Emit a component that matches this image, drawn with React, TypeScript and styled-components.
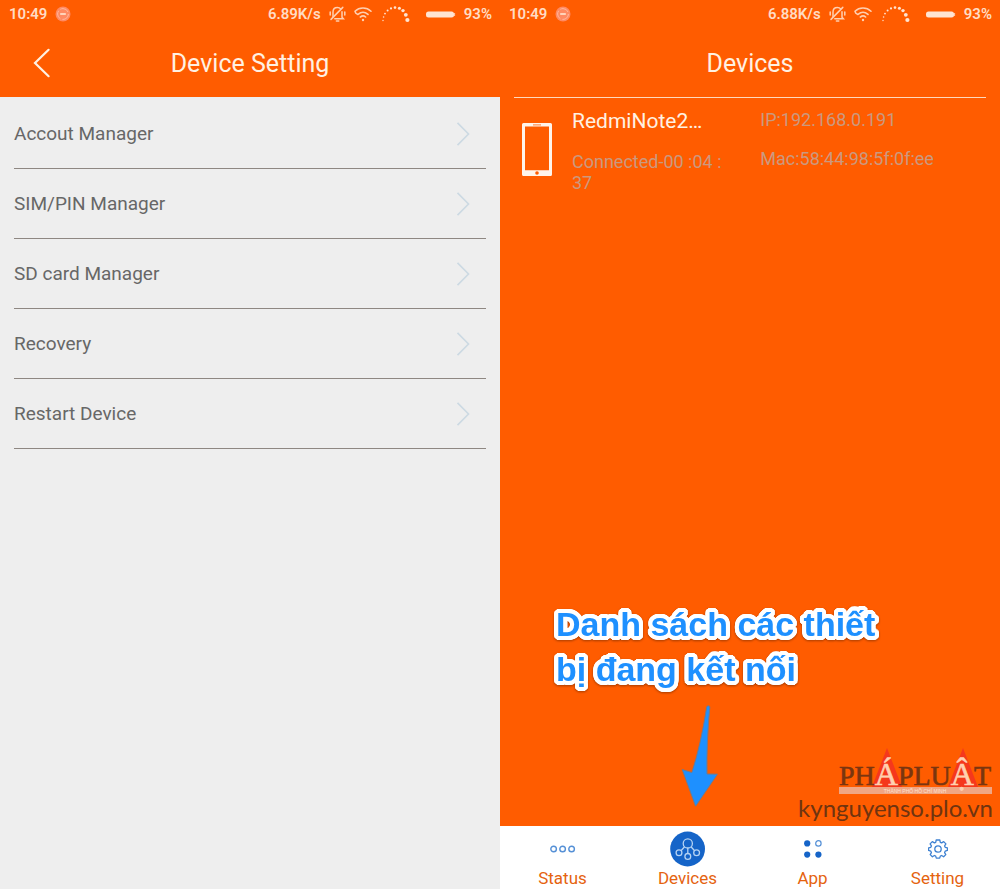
import React from "react";
import styled, { createGlobalStyle } from "styled-components";

const GlobalStyle = createGlobalStyle`
  *, *::before, *::after { box-sizing: border-box; }
  body {
    margin: 0;
    font-family: Roboto, "Noto Sans", sans-serif;
    background: #eeeeee;
  }
  button { font: inherit; border: 0; background: none; padding: 0; cursor: pointer; }
  ul { list-style: none; margin: 0; padding: 0; }
  h1, h2, p { margin: 0; font-weight: 400; }
`;

const orange = "#ff5c00";

const Screens = styled.main`
  display: flex;
  min-height: 100vh;
`;

const Screen = styled.section<{ $tone: string }>`
  flex: 1 1 0;
  min-width: 0;
  display: flex;
  flex-direction: column;
  background: ${(p) => p.$tone};
`;

const Header = styled.header`
  background: ${orange};
  color: #fff1e2;
`;

const StatusBar = styled.div`
  display: flex;
  align-items: center;
  height: 28px;
  padding: 0 8px 0 9px;
  color: #ffdcc4;
  font-size: 15px;
  font-weight: 600;
  line-height: 28px;
`;

const StatusGroup = styled.div`
  display: flex;
  align-items: center;
  gap: 8px;

  &:last-child { margin-left: auto; }
  svg { display: block; }
`;

const SignalSlot = styled.span`
  padding: 0 8px 0 2px;
`;

const TitleBar = styled.div`
  display: grid;
  grid-template-columns: 84px 1fr 84px;
  align-items: center;
  height: 69px;
`;

const Title = styled.h1`
  grid-column: 2;
  padding-top: 2px;
  font-size: 25px;
  line-height: 32px;
  text-align: center;
`;

const BackButton = styled.button`
  grid-column: 1;
  grid-row: 1;
  display: flex;
  justify-content: center;
  align-items: center;
  height: 48px;
  color: #fff1e2;
`;

const SettingsList = styled.ul`
  padding: 2px 14px 0;
`;

const SettingRow = styled.button`
  display: flex;
  align-items: center;
  justify-content: space-between;
  width: 100%;
  height: 70px;
  padding-right: 16px;
  border-bottom: 1px solid #8e8782;
  color: #676767;
  font-size: 19px;
  line-height: 24px;
  text-align: left;
`;

const DevicesBody = styled.div`
  position: relative;
  flex: 1;
`;

const DeviceList = styled.ul`
  margin: 0 14px;
  border-top: 1px solid #ffd9bd;
`;

const DeviceRow = styled.li`
  display: grid;
  grid-template-columns: 30px 7fr 10fr;
  column-gap: 20px;
  padding: 11px 0 0 8px;

  > svg { margin-top: 14px; }
`;

const DeviceInfo = styled.div<{ $indent?: number }>`
  display: flex;
  flex-direction: column;
  gap: 18px;
  padding-left: ${(p) => p.$indent ?? 0}px;
`;

const DeviceName = styled.h2`
  color: #fff1e2;
  font-size: 21px;
  line-height: 24px;
`;

const DeviceDetail = styled.p`
  color: #cb997f;
  font-size: 18px;
  line-height: 21px;
`;

const outline = (radius: number, color: string) =>
  Array.from({ length: 32 }, (_, i) => {
    const angle = (i / 32) * Math.PI * 2;
    return `${(Math.cos(angle) * radius).toFixed(2)}px ${(Math.sin(angle) * radius).toFixed(2)}px 0 ${color}`;
  }).join(", ");

const Callout = styled.p`
  position: absolute;
  left: 56px;
  bottom: 134px;
  width: 350px;
  color: #1e90ff;
  font: 700 34px/45px "Liberation Sans", Arial, sans-serif;
  text-shadow: ${outline(2, "#ffffff")}, ${outline(4, "#ffffff")};
  filter: drop-shadow(0 1px 1px rgba(80, 30, 0, 0.5));
`;

const CalloutArrow = styled.svg`
  position: absolute;
  left: 180px;
  bottom: 18px;
`;

const Watermark = styled.div`
  position: absolute;
  right: 7px;
  bottom: 4px;
  text-align: right;
  color: #6f3410;

  svg { display: block; margin-left: auto; }
`;

const WatermarkSite = styled.p`
  font-family: Lato, sans-serif;
  font-size: 24px;
  line-height: 28px;
`;

const TabBar = styled.nav`
  display: flex;
  height: 63px;
  background: #ffffff;
`;

const Tab = styled.button`
  flex: 1;
  display: flex;
  flex-direction: column;
  align-items: center;
  padding-top: 4px;
  color: #e5630f;
  font-size: 17px;
  line-height: 20px;
  gap: 1px;

  svg { display: block; }
`;

const TabIcon = styled.span`
  display: flex;
  align-items: center;
  justify-content: center;
  height: 37px;
`;

const SyncBadge = () => (
  <svg width="16" height="16" viewBox="0 0 16 16" aria-hidden="true">
    <circle cx="8" cy="8" r="7.5" fill="#ff8a62" />
    <circle cx="8" cy="8" r="5.4" fill="none" stroke="#ffb79c" strokeWidth="1" strokeDasharray="9 2" />
    <path d="M5.2 8h5.6" stroke="#ffdcc4" strokeWidth="1.8" />
  </svg>
);

const MutedBell = () => (
  <svg width="17" height="16" viewBox="0 0 17 16" fill="none" stroke="#ffcfb0" strokeWidth="1.5" strokeLinecap="round" aria-hidden="true">
    <path d="M4 10.6V6.2C4 3.4 5.9 1.6 8.4 1.6c1.4 0 2.6.5 3.4 1.4M13 5.8v5.4l1.4 1.6H5.8" />
    <path d="M2 13.4 13.8 1.4M7.4 15h2.4M1.2 6v3M15.8 6v3" />
  </svg>
);

const Wifi = () => (
  <svg width="18" height="16" viewBox="0 0 18 16" fill="none" stroke="#ffcfb0" strokeWidth="1.6" strokeLinecap="round" aria-hidden="true">
    <path d="M1 5.2C5.4.9 12.6.9 17 5.2M3.6 8.4C1 6.8 1 6.4 1.2 5.4M4 8.4c3.2-2.8 6.8-2.8 10 0M6.4 11c1.8-1.4 3.6-1.4 5.2 0" />
    <circle cx="9" cy="14" r="1.2" fill="#ffcfb0" stroke="none" />
  </svg>
);

const signalDots: [number, number, number][] = [
  [1, 14.5, 0.7],
  [1.6, 11, 0.8],
  [3, 7.6, 0.9],
  [5.6, 4.6, 1],
  [9, 2.4, 1.1],
  [13, 1.6, 1.3],
  [17.4, 2.2, 1.5],
  [21, 4.6, 1.7],
  [23.8, 8.8, 1.9],
  [25.4, 14, 2.1],
];

const SignalArc = () => (
  <svg width="28" height="17" viewBox="0 0 28 17" fill="#ffe4d2" aria-hidden="true">
    {signalDots.map(([x, y, r]) => (
      <circle key={x} cx={x} cy={y} r={r} />
    ))}
  </svg>
);

const Battery = () => (
  <svg width="30" height="7" viewBox="0 0 30 7" aria-hidden="true">
    <rect width="28" height="6" y="0.5" rx="2.5" fill="#ffe4d2" />
    <path d="M28.6 2v3" stroke="#ffcfb0" strokeWidth="1" />
  </svg>
);

const Phone = () => (
  <svg width="30" height="54" viewBox="0 0 30 54" aria-hidden="true">
    <path
      fillRule="evenodd"
      fill="#fff4ea"
      d="M1.5 0h27a1.5 1.5 0 0 1 1.5 1.5v50a1.5 1.5 0 0 1-1.5 1.5h-27a1.5 1.5 0 0 1-1.5-1.5v-50a1.5 1.5 0 0 1 1.5-1.5ZM3 3.6v43.6h24V3.6Z"
    />
    <path d="M11 1.9h8" stroke={orange} strokeWidth="0.8" />
    <circle cx="15" cy="50" r="1.8" fill={orange} />
  </svg>
);

const Chevron = () => (
  <svg width="14" height="24" viewBox="0 0 14 24" fill="none" stroke="#cddae3" strokeWidth="1.7" aria-hidden="true">
    <path d="M1.5 .8 12.5 12 1.5 23.2" />
  </svg>
);

const BackArrow = () => (
  <svg width="18" height="30" viewBox="0 0 18 30" fill="none" stroke="currentColor" strokeWidth="2.2" strokeLinecap="round" aria-hidden="true">
    <path d="M15.6 1.8 2 15l13.6 13.2" />
  </svg>
);

const blue = "#1564c8";

const StatusIcon = () => (
  <svg width="26" height="8" viewBox="0 0 26 8" fill="none" stroke="#5590d6" strokeWidth="1.4" aria-hidden="true">
    <circle cx="3.6" cy="4" r="2.8" />
    <circle cx="12.6" cy="4" r="2.8" />
    <circle cx="21.6" cy="4" r="2.8" />
  </svg>
);

const DevicesIcon = () => (
  <svg width="36" height="36" viewBox="0 0 36 36" fill="none" stroke="#b6d3f3" strokeWidth="1.3" aria-hidden="true">
    <circle cx="17.6" cy="18" r="17.4" fill={blue} stroke="none" />
    <circle cx="17.8" cy="12.4" r="4.6" />
    <circle cx="9" cy="21.8" r="2.9" />
    <circle cx="17.8" cy="25.4" r="2.9" />
    <circle cx="26.6" cy="21.8" r="2.9" />
    <path d="M17.8 17v5.6M14.6 15.8l-3.6 4M21 15.8l3.6 4" />
  </svg>
);

const AppIcon = () => (
  <svg width="18" height="18" viewBox="0 0 18 18" fill={blue} aria-hidden="true">
    <circle cx="3.2" cy="3.4" r="3.1" />
    <circle cx="14.4" cy="3.4" r="2.7" fill="none" stroke="#5590d6" strokeWidth="1.2" />
    <circle cx="3.2" cy="14.6" r="3.1" />
    <circle cx="14.4" cy="14.6" r="3.1" />
  </svg>
);

const GearIcon = () => (
  <svg width="20" height="20" viewBox="0 0 20 20" fill="none" stroke="#3f82d2" strokeWidth="1.3" strokeLinejoin="round" aria-hidden="true">
    <path d="M8.2 1h3.6l.5 2.3 1.3.6 2.1-1.3 2.2 2.3-1.3 2 .6 1.4 2.2.5v2.6l-2.2.8-.6 1.4 1.2 2-2.2 2.2-2-1.3-1.3.6-.6 2H8.3l-.6-2-1.3-.6-2 1.3-2.2-2.2 1.2-2-.6-1.4-2.2-.8V8.8l2.2-.5.6-1.4-1.3-2 2.2-2.3 2.1 1.3 1.3-.6Z" />
    <circle cx="10" cy="10" r="3.2" />
  </svg>
);

const settings = ["Accout Manager", "SIM/PIN Manager", "SD card Manager", "Recovery", "Restart Device"];

const tabs = [
  { label: "Status", icon: <StatusIcon /> },
  { label: "Devices", icon: <DevicesIcon /> },
  { label: "App", icon: <AppIcon /> },
  { label: "Setting", icon: <GearIcon /> },
];

function PhoneStatus({ speed }: { speed: string }) {
  return (
    <StatusBar>
      <StatusGroup>
        <span>10:49</span>
        <SyncBadge />
      </StatusGroup>
      <StatusGroup>
        <span>{speed}</span>
        <MutedBell />
        <Wifi />
        <SignalSlot>
          <SignalArc />
        </SignalSlot>
        <Battery />
        <span>93%</span>
      </StatusGroup>
    </StatusBar>
  );
}

function PublisherLogo() {
  return (
    <svg width="155" height="46" viewBox="0 0 155 46" aria-label="Pháp Luật">
      <path d="M49 0 64 39H34Z M125 0 140 39H110Z" fill="#f5381c" />
      <rect x="1" y="39" width="153" height="7" fill="#f0a684" />
      <text
        x="1"
        y="37"
        fontFamily="Liberation Serif, serif"
        fontSize="28"
        fill="#7a3510"
        stroke="#7a3510"
        strokeWidth="0.6"
      >
        PH
        <tspan fontSize="32" fill="#ffd0b0" stroke="#ffd0b0">Á</tspan>
        PLU
        <tspan fontSize="32" fill="#ffd0b0" stroke="#ffd0b0">Ậ</tspan>
        T
      </text>
      <text x="77" y="45" textAnchor="middle" fontFamily="Liberation Sans, sans-serif" fontSize="5" fill="#ffe0cc">
        THÀNH PHỐ HỒ CHÍ MINH
      </text>
    </svg>
  );
}

export default function App() {
  return (
    <>
      <GlobalStyle />
      <Screens>
        <Screen $tone="#eeeeee">
          <Header>
            <PhoneStatus speed="6.89K/s" />
            <TitleBar>
              <BackButton aria-label="Back">
                <BackArrow />
              </BackButton>
              <Title>Device Setting</Title>
            </TitleBar>
          </Header>
          <SettingsList>
            {settings.map((name) => (
              <li key={name}>
                <SettingRow>
                  {name}
                  <Chevron />
                </SettingRow>
              </li>
            ))}
          </SettingsList>
        </Screen>

        <Screen $tone={orange}>
          <Header>
            <PhoneStatus speed="6.88K/s" />
            <TitleBar>
              <Title>Devices</Title>
            </TitleBar>
          </Header>
          <DevicesBody>
            <DeviceList>
              <DeviceRow>
                <Phone />
                <DeviceInfo>
                  <DeviceName>RedmiNote2…</DeviceName>
                  <DeviceDetail>Connected-00 :04 : 37</DeviceDetail>
                </DeviceInfo>
                <DeviceInfo $indent={6}>
                  <DeviceDetail>IP:192.168.0.191</DeviceDetail>
                  <DeviceDetail>Mac:58:44:98:5f:0f:ee</DeviceDetail>
                </DeviceInfo>
              </DeviceRow>
            </DeviceList>
            <Callout>
              Danh sách các thiết
              <br />
              bị đang kết nối
            </Callout>
            <CalloutArrow width="40" height="104" viewBox="0 0 40 104" aria-hidden="true">
              <path
                d="M26.8 2.6Q28.2 1 29.8 2.8Q26.4 40 27 70L37.4 70.2 15.6 102.2 2.2 65.5 11.8 68.6Q20.6 42 26.8 2.6Z"
                fill="#1e90ff"
                stroke="#6b7c94"
                strokeWidth="1"
              />
            </CalloutArrow>
            <Watermark>
              <PublisherLogo />
              <WatermarkSite>kynguyenso.plo.vn</WatermarkSite>
            </Watermark>
          </DevicesBody>
          <TabBar aria-label="Main">
            {tabs.map((tab) => (
              <Tab key={tab.label}>
                <TabIcon>{tab.icon}</TabIcon>
                {tab.label}
              </Tab>
            ))}
          </TabBar>
        </Screen>
      </Screens>
    </>
  );
}
